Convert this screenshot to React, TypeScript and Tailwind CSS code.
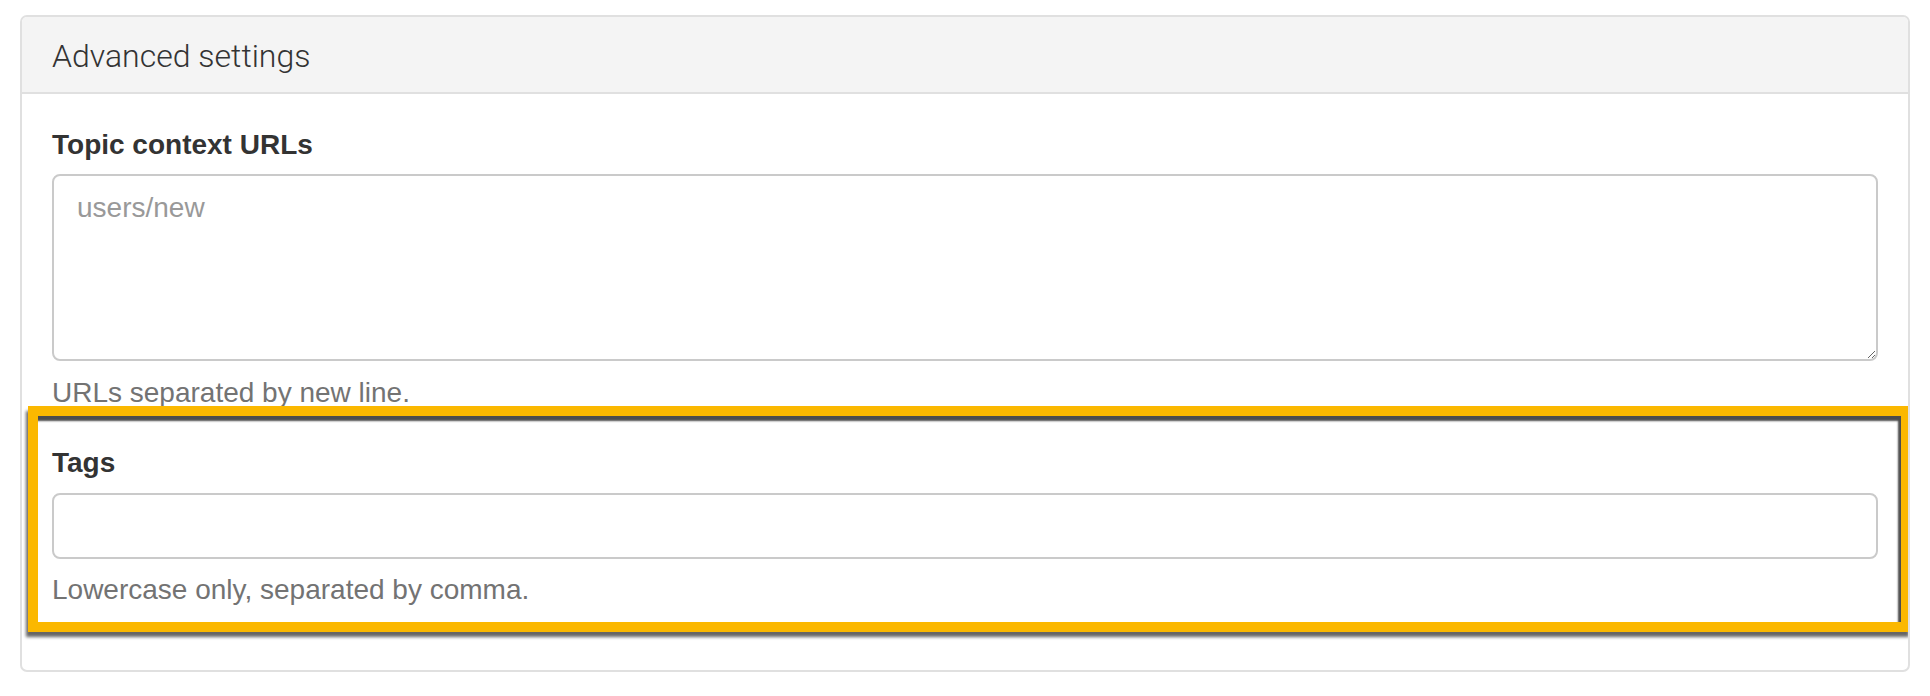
export default function App() {
  return (
    <div className="w-[1930px] h-[696px] bg-white pt-[15px] pl-[20px] font-['Liberation_Sans',Arial,sans-serif]">
      <div className="w-[1890px] h-[657px] border-2 border-[#e0e0e0] rounded-[7px] overflow-hidden">
        <div className="h-[77px] bg-[#f4f4f4] border-b-2 border-[#e0e0e0] px-[30px] flex items-center">
          <h2 className="text-[32px] font-light text-[#333] font-['Roboto',sans-serif] leading-none pt-[2px]">
            Advanced settings
          </h2>
        </div>

        <div className="px-[30px]">
          <label className="block mt-[33px] text-[28px] leading-[35px] font-bold text-[#333]">
            Topic context URLs
          </label>
          <textarea
            placeholder="users/new"
            className="block mt-[12px] w-full h-[187px] border-2 border-[#cacaca] rounded-[8px] px-[23px] py-[14px] text-[28px] leading-[35px] text-[#333] placeholder:text-[#999] outline-none resize-y"
          />
          <p className="mt-[14px] text-[28px] leading-[35px] text-[#737373]">
            URLs separated by new line.
          </p>

          <div className="relative pt-[35px] pb-[25px]">
            <div className="absolute -top-[4px] -left-[24px] -right-[33px] bottom-0 border-[10px] border-[#fbb800] shadow-[-2px_5px_3px_rgba(0,0,0,0.6),inset_-3px_5px_2px_rgba(0,0,0,0.7)] pointer-events-none" />
            <label className="block text-[28px] leading-[35px] font-bold text-[#333]">Tags</label>
            <input
              type="text"
              className="block mt-[13px] w-full h-[66px] border-2 border-[#cacaca] rounded-[8px] px-[23px] text-[28px] text-[#333] outline-none"
            />
            <p className="mt-[13px] text-[28px] leading-[35px] text-[#737373]">
              Lowercase only, separated by comma.
            </p>
          </div>
        </div>
      </div>
    </div>
  );
}
